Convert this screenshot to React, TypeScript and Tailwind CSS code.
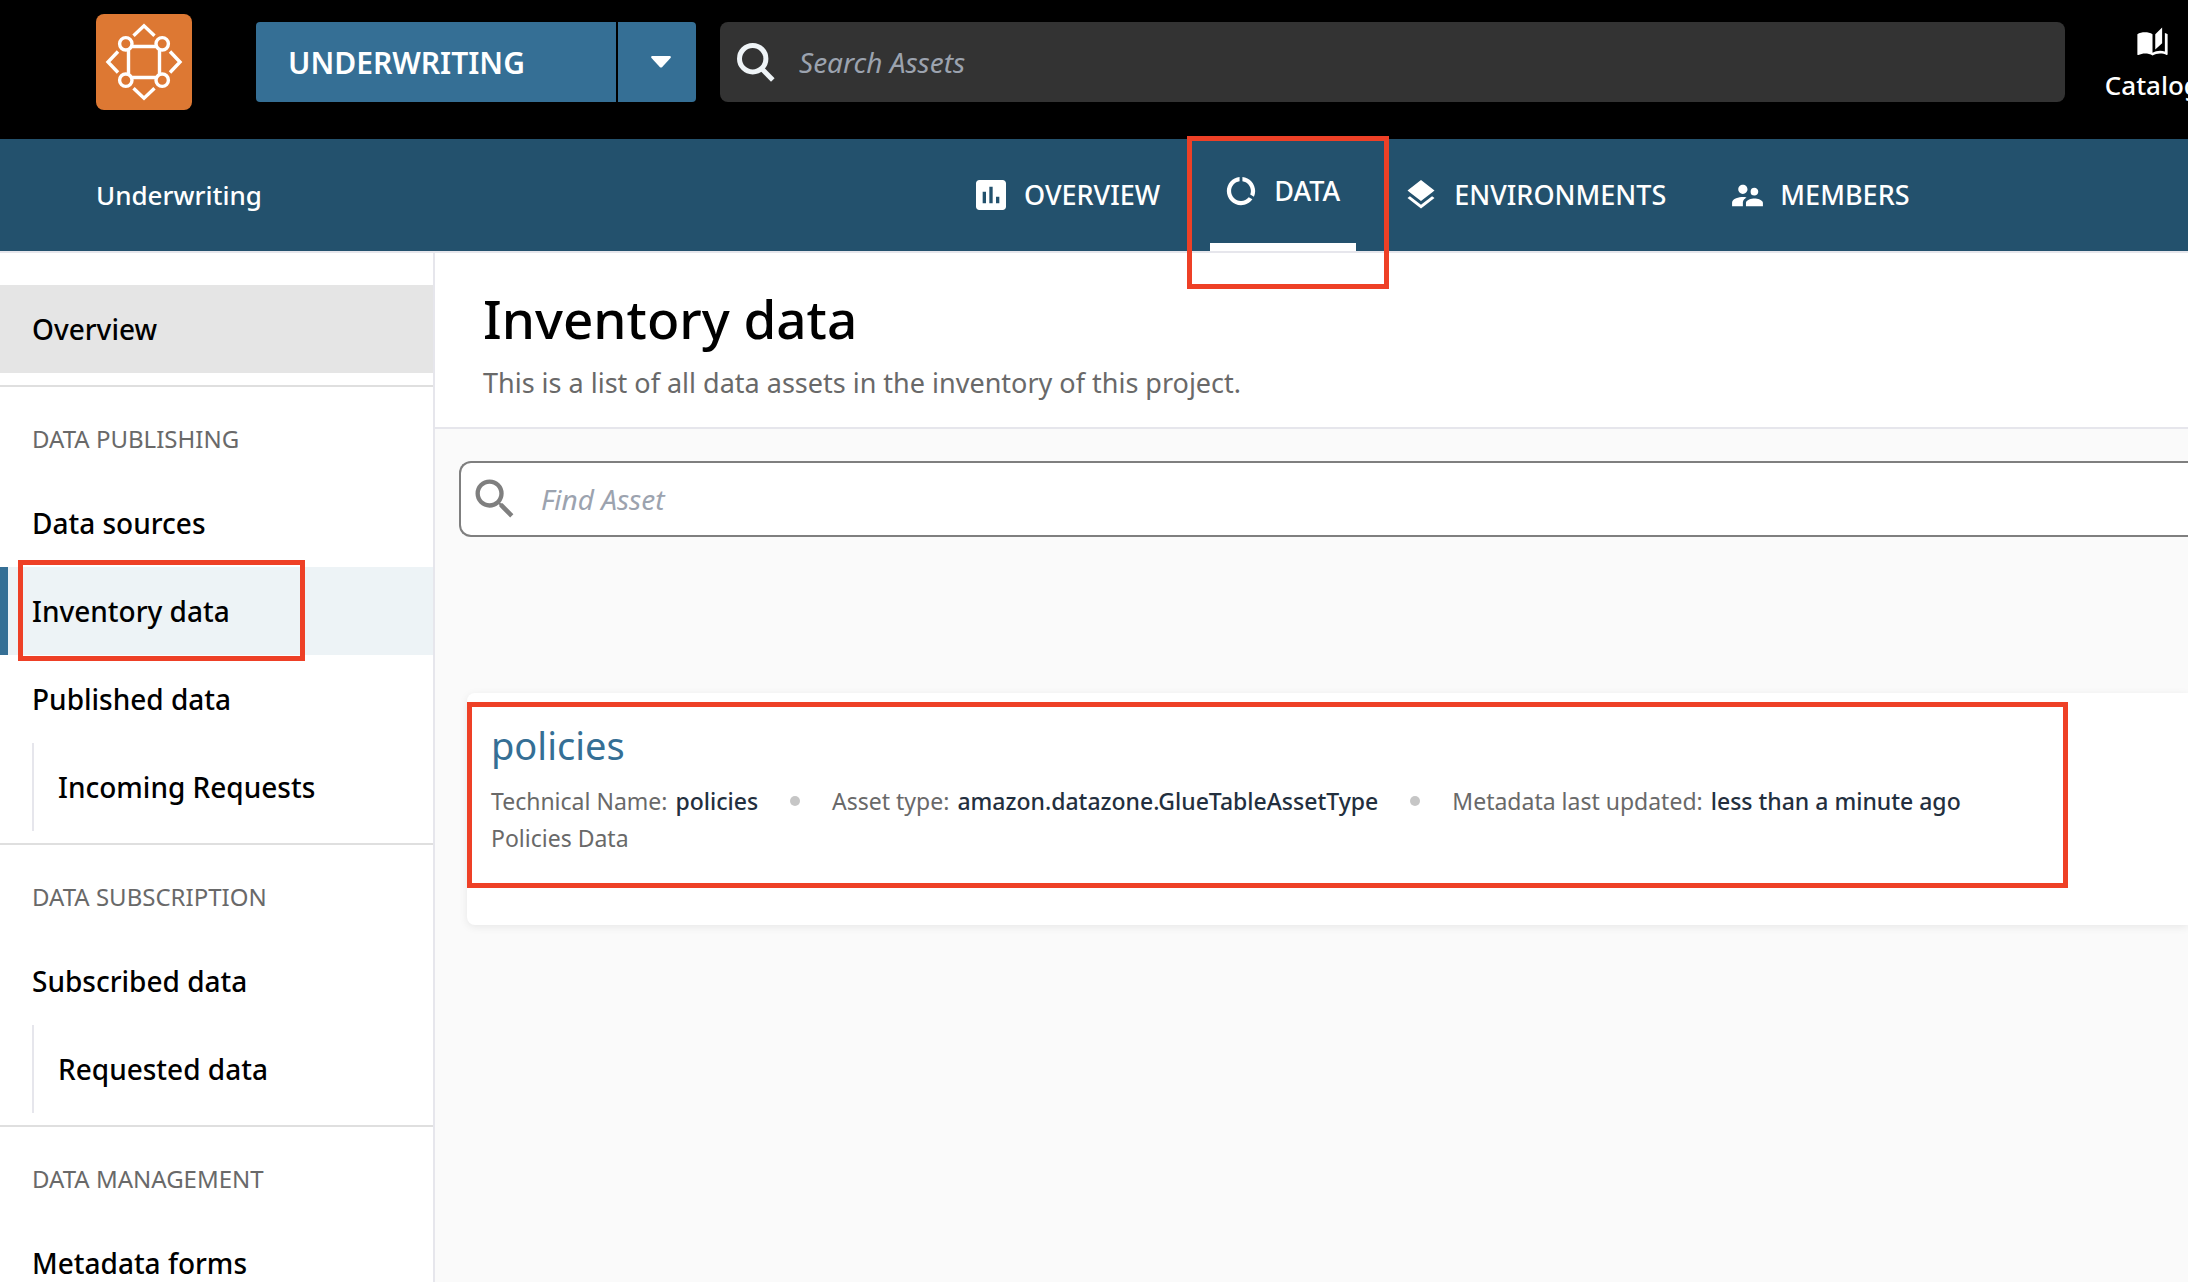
import React from "react";
import type { ReactNode } from "react";
import {
  MdAssessment,
  MdAutoStories,
  MdDataUsage,
  MdLayers,
  MdSearch,
  MdSupervisorAccount,
} from "react-icons/md";

function Highlight({ className }: { className: string }) {
  return (
    <span
      aria-hidden="true"
      className={`pointer-events-none absolute z-10 border-5 border-[#ee4026] ${className}`}
    />
  );
}

function Logo() {
  return (
    <svg viewBox="0 0 96 96" className="size-24 rounded-lg bg-[#dd7833]" fill="none" stroke="#fff" strokeWidth="3.4" aria-hidden="true">
      <path d="M37.5 21.8 48 11.8 58.500 21.8" />
      <path d="M37.5 74.2 48 84.2 58.500 74.2" />
      <path d="M22 37.5 12 48 22 58.5" />
      <path d="M74 37.5 84 48 74 58.5" />
      <circle cx="29.8" cy="29.8" r="6.2" />
      <circle cx="66.2" cy="29.8" r="6.2" />
      <circle cx="29.8" cy="66.2" r="6.2" />
      <circle cx="66.2" cy="66.2" r="6.2" />
      <path d="M35.5 32.500H60.5M35.5 63.500H60.5M32.500 35.5V60.5M63.500 35.5V60.5" />
    </svg>
  );
}

function TopBar() {
  return (
    <header className="flex h-[139px] shrink-0 items-start bg-black pl-24 text-white">
      <a href="#home" aria-label="Home" className="mt-3.5 shrink-0">
        <Logo />
      </a>
      <div className="mt-[22px] ml-16 flex h-20 shrink-0 gap-0.5">
        <button className="w-[360px] rounded-l-sm bg-[#356f95] pl-8 text-left text-[30px] font-semibold">
          UNDERWRITING
        </button>
        <button aria-label="Switch project" className="flex w-[78px] items-center justify-center rounded-r-sm bg-[#356f95] pl-2">
          <svg viewBox="0 0 20 12" className="h-3 w-5" fill="#fff" aria-hidden="true">
            <path d="M1 0H19Q20.500 .5 19.500 2L11 11.200Q10 12 9 11.200L.5 2Q-.5 .5 1 0Z" />
          </svg>
        </button>
      </div>
      <label className="mt-[22px] ml-6 flex h-20 min-w-0 grow items-center rounded-lg bg-[#333] pl-[17px]">
        <svg viewBox="0 0 38 39" className="h-[39px] w-[38px] shrink-0" fill="none" stroke="#eff4f7" strokeWidth="5" aria-hidden="true">
          <circle cx="15.700" cy="15.700" r="13.200" />
          <path d="M24.500 25.500 35.800 37" />
        </svg>
        <input
          type="search"
          aria-label="Search assets"
          placeholder="Search Assets"
          className="ml-6 h-full grow bg-transparent text-[28px] italic outline-none placeholder:text-[#9ca3af]"
        />
      </label>
      <a href="#catalog" className="mt-[26px] -mr-3 ml-10 flex shrink-0 flex-col items-center text-[26px] leading-9 font-medium">
        <MdAutoStories className="size-[33px]" />
        <span className="mt-2">Catalog</span>
      </a>
    </header>
  );
}

function NavTab({ icon, label, active = false }: { icon: ReactNode; label: string; active?: boolean }) {
  return (
    <a
      href={`#${label.toLowerCase()}`}
      aria-current={active ? "page" : undefined}
      className={`relative flex items-center gap-[18px] px-4 ${active ? "border-b-8 border-white" : ""}`}
    >
      <span className="flex w-[30px] justify-center">{icon}</span>
      {label}
      {active && <Highlight className="-top-[3px] -right-[33px] -bottom-[46px] -left-[23px]" />}
    </a>
  );
}

function ProjectBar() {
  return (
    <div className="flex h-28 shrink-0 bg-[#23516d] pl-24 font-medium text-white">
      <span className="w-[864px] shrink-0 self-center text-[26px]">Underwriting</span>
      <nav className="flex gap-[34px] text-[27px]" aria-label="Project">
        <NavTab icon={<MdAssessment className="size-10 shrink-0" />} label="OVERVIEW" />
        <NavTab icon={<MdDataUsage className="size-[34px] shrink-0" />} label="DATA" active />
        <NavTab icon={<MdLayers className="size-9 shrink-0" />} label="ENVIRONMENTS" />
        <NavTab icon={<MdSupervisorAccount className="size-[37px] shrink-0" />} label="MEMBERS" />
      </nav>
    </div>
  );
}

function SideLink({ label, nested = false, className = "" }: { label: string; nested?: boolean; className?: string }) {
  return (
    <a
      href={`#${label.toLowerCase().replace(" ", "-")}`}
      className={`flex h-22 items-center ${nested ? "ml-8 border-l-2 border-[#e6e6ec] pl-6" : "pl-8"} ${className}`}
    >
      {label}
    </a>
  );
}

function SideGroup({ title, children }: { title: string; children: ReactNode }) {
  return (
    <section className="border-t-2 border-[#dfdfdf] pb-3">
      <h2 className="flex h-[92px] items-center pt-3 pl-8 text-2xl font-normal text-[#696969]">{title}</h2>
      {children}
    </section>
  );
}

function Sidebar() {
  return (
    <nav aria-label="Data" className="w-[435px] shrink-0 border-r-2 border-[#e6e6ec] bg-white pt-8 text-[28px] font-medium text-black">
      <SideLink label="Overview" className="mb-3 bg-[#e5e5e5]" />
      <SideGroup title="DATA PUBLISHING">
        <SideLink label="Data sources" />
        <div className="relative border-l-8 border-[#356f95] bg-[#edf3f6]">
          <SideLink label="Inventory data" className="-ml-2" />
          <Highlight className="-top-[7px] -bottom-[6px] left-[10px] w-[287px]" />
        </div>
        <SideLink label="Published data" />
        <SideLink label="Incoming Requests" nested />
      </SideGroup>
      <SideGroup title="DATA SUBSCRIPTION">
        <SideLink label="Subscribed data" />
        <SideLink label="Requested data" nested />
      </SideGroup>
      <SideGroup title="DATA MANAGEMENT">
        <SideLink label="Metadata forms" />
      </SideGroup>
    </nav>
  );
}

function Fact({ label, value }: { label: string; value: string }) {
  return (
    <li className="group flex items-center whitespace-nowrap">
      <span className="mr-8 size-2.5 rounded-full bg-[#c6c6c6] group-first:hidden" />
      <span className="mr-2">{label}:</span>
      <span className="font-medium text-[#232f3e]">{value}</span>
    </li>
  );
}

function AssetCard() {
  return (
    <article className="relative mt-39 ml-8 h-[232px] rounded-l-lg bg-white px-6 pt-[26px] text-[23px] text-[#696969] shadow-[0_2px_8px_rgba(0,0,0,0.08)]">
      <h2 className="text-[38px] leading-[52px] text-[#356f95]">
        <a href="#policies">policies</a>
      </h2>
      <ul className="mt-3 flex gap-x-8 leading-9">
        <Fact label="Technical Name" value="policies" />
        <Fact label="Asset type" value="amazon.datazone.GlueTableAssetType" />
        <Fact label="Metadata last updated" value="less than a minute ago" />
      </ul>
      <p className="leading-[38px]">Policies Data</p>
      <Highlight className="top-[9px] right-[120px] bottom-[37px] left-0" />
    </article>
  );
}

function Inventory() {
  return (
    <main className="min-w-0 grow bg-[#fafafa]">
      <div className="h-44 border-b-2 border-[#e6e6ec] bg-white pt-[30px] pl-12">
        <h1 className="text-[53px] leading-[72px] font-medium text-black">Inventory data</h1>
        <p className="mt-2 text-[27px] leading-10 text-[#696969]">
          This is a list of all data assets in the inventory of this project.
        </p>
      </div>
      <label className="mt-8 ml-6 flex h-19 items-center rounded-l-xl border-2 border-r-0 border-[#7f7f7f] bg-white pl-2">
        <MdSearch className="size-[52px] shrink-0 text-[#7f7f7f]" />
        <input
          type="search"
          aria-label="Find asset"
          placeholder="Find Asset"
          className="ml-5 h-full grow bg-transparent text-[28px] italic outline-none placeholder:text-[#9ca3af]"
        />
      </label>
      <AssetCard />
    </main>
  );
}

export default function App() {
  return (
    <div className="flex h-screen flex-col overflow-hidden bg-[#fafafa] font-['Noto_Sans',sans-serif]">
      <TopBar />
      <ProjectBar />
      <div className="flex min-h-0 grow border-t-2 border-[#e6e6ec]">
        <Sidebar />
        <Inventory />
      </div>
    </div>
  );
}
